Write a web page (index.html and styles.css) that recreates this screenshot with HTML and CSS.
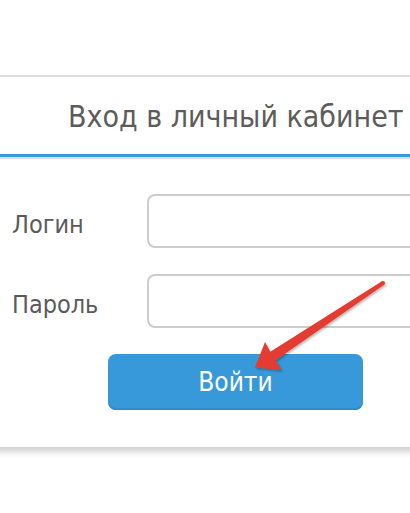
FILE: index.html
```html
<!DOCTYPE html>
<html lang="ru">
<head>
<meta charset="utf-8">
<link rel="stylesheet" href="styles.css">
</head>
<body>
<div class="page">
  <div class="panel">
    <div class="panel-head">
      <h1 class="title">Вход в личный кабинет</h1>
    </div>
    <div class="panel-body">
      <div class="row">
        <label class="label">Логин</label>
        <div class="input"></div>
      </div>
      <div class="row">
        <label class="label">Пароль</label>
        <div class="input"></div>
      </div>
      <div class="actions">
        <button class="btn">Войти</button>
      </div>
    </div>
  </div>
  <svg class="arrow" width="410" height="513" viewBox="0 0 410 513">
    <defs>
      <filter id="sh" x="-20%" y="-20%" width="140%" height="140%">
        <feDropShadow dx="1.2" dy="1.5" stdDeviation="0.8" flood-color="#000" flood-opacity="0.3"/>
      </filter>
    </defs>
    <g filter="url(#sh)" fill="#e43b30">
      <polygon points="381.9,281.3 270.3,351.8 265,342 255,367.5 281.5,370 275.7,360.2 384.1,284.7"/>
      <circle cx="383" cy="283" r="2"/>
    </g>
  </svg>
</div>
</body>
</html>
```

FILE: styles.css
```css
html, body {
  margin: 0;
  padding: 0;
  background: #fff;
}
.page {
  position: relative;
  width: 410px;
  height: 513px;
  overflow: hidden;
  padding-top: 75px;
  box-sizing: border-box;
  font-family: "DejaVu Sans Condensed", "DejaVu Sans", sans-serif;
  color: #5c5c5c;
}
.panel {
  margin-left: -20px;
  width: 470px;
  border-top: 2px solid #dddddd;
  background: #fff;
  box-shadow: 0 7px 6px -2px rgba(0,0,0,0.18);
}
.panel-head {
  height: 77px;
  border-bottom: 3px solid #3a9ad9;
  box-shadow: 0 2px 0 #dddddd;
  display: flex;
  align-items: center;
  padding-left: 88px;
}
.title {
  margin: 0;
  font-weight: normal;
  font-size: 30px;
  line-height: 1;
  color: #5c5c5c;
  padding-top: 3px;
  white-space: nowrap;
}
.panel-body {
  padding: 37px 0 37px 32px;
}
.row {
  display: flex;
  align-items: center;
  margin-bottom: 26px;
}
.label {
  width: 135px;
  font-size: 25px;
  color: #5a5a5a;
  padding-top: 6px;
}
.input {
  width: 300px;
  height: 50px;
  border: 2px solid #cccccc;
  border-radius: 8px;
  background: #fff;
}
.actions {
  padding-left: 96px;
}
.btn {
  width: 255px;
  height: 56px;
  border: none;
  border-radius: 8px;
  background: #3899da;
  box-shadow: inset 0 -2px 0 #2f8bcc;
  color: #fff;
  font-family: "DejaVu Sans Condensed", "DejaVu Sans", sans-serif;
  font-size: 26px;
  padding: 0;
  cursor: pointer;
}
.arrow {
  position: absolute;
  left: 0;
  top: 0;
  pointer-events: none;
}
```
